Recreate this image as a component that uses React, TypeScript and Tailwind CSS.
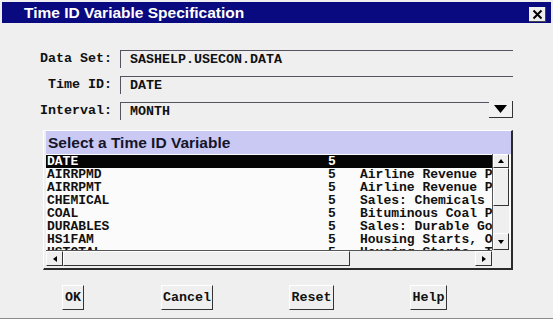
import React from 'react';

const mono = { fontFamily: '"Liberation Mono", "DejaVu Sans Mono", monospace' };
const sans = { fontFamily: '"Liberation Sans", Arial, sans-serif' };

const rows = [
  { name: 'DATE', len: '5', label: '' },
  { name: 'AIRRPMD', len: '5', label: 'Airline Revenue Passenger Miles' },
  { name: 'AIRRPMT', len: '5', label: 'Airline Revenue Passenger Miles' },
  { name: 'CHEMICAL', len: '5', label: 'Sales: Chemicals and Allied' },
  { name: 'COAL', len: '5', label: 'Bituminous Coal Production' },
  { name: 'DURABLES', len: '5', label: 'Sales: Durable Goods' },
  { name: 'HS1FAM', len: '5', label: 'Housing Starts, One Family' },
  { name: 'HSTOTAL', len: '5', label: 'Housing Starts, Total' },
];

function Field({ label, value, width }: { label: string; value: string; width: string }) {
  return (
    <div className="flex items-center h-[18px]">
      <div className="w-[113px] shrink-0 text-right pr-[1px] text-[13.33px] font-bold text-[#111]" style={mono}>
        {label}
      </div>
      <div className={`ml-[7px] shrink-0 h-[18px] border-t border-l border-[#55535f] pl-[9px] flex items-center text-[13.33px] font-bold text-[#111] ${width}`} style={mono}>
        {value}
      </div>
    </div>
  );
}

function Arrow({ dir }: { dir: 'up' | 'down' | 'left' | 'right' }) {
  const pts = {
    up: '1,5 4,1 7,5',
    down: '1,1 4,5 7,1',
    left: '5,1 1,4 5,7',
    right: '1,1 5,4 1,7',
  }[dir];
  const w = dir === 'up' || dir === 'down' ? 8 : 6;
  const h = dir === 'up' || dir === 'down' ? 6 : 8;
  return (
    <svg width={w} height={h} viewBox={`0 0 ${w} ${h}`}>
      <polygon points={pts} fill="#000" />
    </svg>
  );
}

function Bevel({ className, children }: { className: string; children?: React.ReactNode }) {
  return (
    <div className={`shrink-0 bg-[#efefef] border-t border-l border-white border-r border-b border-r-[#333] border-b-[#333] flex items-center justify-center ${className}`}>
      {children}
    </div>
  );
}

export default function App() {
  return (
    <div className="w-[553px] h-[319px] bg-[#efefef] flex flex-col border-b border-[#8a8a8a] overflow-hidden">
      <div className="mx-[2px] mt-[2px] h-[21px] shrink-0 bg-[#0a0a80] flex items-center justify-between pl-[22px] pr-[5px]">
        <span className="text-white text-[15.5px] font-bold" style={sans}>Time ID Variable Specification</span>
        <div className="w-[17px] h-[15px] mt-[4px] bg-[#eeeeee] border-r border-b border-[#444] flex items-center justify-center">
          <svg width="11" height="11" viewBox="0 0 11 11">
            <path d="M1.5 1.5 L9.5 9.5 M9.5 1.5 L1.5 9.5" stroke="#000" strokeWidth="2" />
          </svg>
        </div>
      </div>

      <div className="mt-[27px] flex flex-col gap-[8px]">
        <Field label="Data Set:" value="SASHELP.USECON.DATA" width="w-[393px]" />
        <Field label="Time ID:" value="DATE" width="w-[393px]" />
        <div className="flex items-start">
          <Field label="Interval:" value="MONTH" width="w-[369px]" />
          <div className="w-[24px] h-[17px] -mt-[1px] shrink-0 bg-[#f2f2f2] border-r border-b border-[#333] flex items-center justify-center">
            <svg width="13" height="8" viewBox="0 0 13 8">
              <polygon points="0,0 13,0 6.5,8" fill="#000" />
            </svg>
          </div>
        </div>
      </div>

      <div className="ml-[43px] mt-[10px] w-[470px] h-[140px] shrink-0 border-t border-l border-white border-r-2 border-b-2 border-r-[#2a2a2a] border-b-[#2a2a2a] pl-[2px] flex flex-col">
        <div className="w-[465px] h-[23px] shrink-0 bg-[#c9c9f4] flex items-center pl-[2px] text-[15.5px] font-bold text-[#15152a]" style={sans}>
          Select a Time ID Variable
        </div>
        <div className="flex h-[96px] shrink-0 bg-[#fbfbfb]">
          <div className="w-[446px] shrink-0 pt-[1px] overflow-hidden">
            {rows.map((r, i) => (
              <div
                key={r.name}
                className={`flex h-[13px] items-center whitespace-nowrap text-[13px] font-bold leading-[13px] ${i === 0 ? 'bg-[#050505] text-white' : 'text-[#111]'}`}
                style={mono}
              >
                <span className="w-[282px] shrink-0 pl-[1px]">{r.name}</span>
                <span className="w-[32px] shrink-0">{r.len}</span>
                <span className="shrink-0">{r.label}</span>
              </div>
            ))}
          </div>
          <div className="w-[17px] shrink-0 bg-[#efefef] border-l border-[#555] flex flex-col">
            <Bevel className="h-[14px]"><Arrow dir="up" /></Bevel>
            <Bevel className="h-[38px]" />
            <div className="flex-1" />
            <Bevel className="h-[17px]"><Arrow dir="down" /></Bevel>
          </div>
        </div>
        <div className="flex h-[16px] shrink-0">
          <div className="w-[446px] shrink-0 flex bg-[#efefef] border-t border-[#555]">
            <Bevel className="w-[17px]"><Arrow dir="left" /></Bevel>
            <Bevel className="w-[287px]" />
            <div className="flex-1" />
            <Bevel className="w-[17px]"><Arrow dir="right" /></Bevel>
          </div>
        </div>
      </div>

      <div className="mt-[15px] flex items-start text-[13.33px] font-bold text-[#111]" style={mono}>
        <Bevel className="ml-[62px] w-[22px] h-[25px]">OK</Bevel>
        <Bevel className="ml-[77px] w-[52px] h-[25px]">Cancel</Bevel>
        <Bevel className="ml-[76px] w-[45px] h-[25px]">Reset</Bevel>
        <Bevel className="ml-[76px] w-[37px] h-[25px]">Help</Bevel>
      </div>
    </div>
  );
}
